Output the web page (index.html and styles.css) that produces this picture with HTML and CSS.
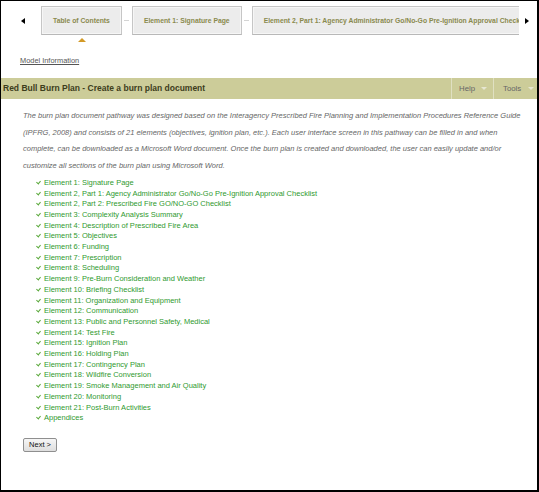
FILE: index.html
```html
<!DOCTYPE html>
<html>
<head>
<meta charset="utf-8">
<link rel="stylesheet" href="styles.css">
</head>
<body>
<div class="frame">
  <div class="steps">
    <span class="nav-arrow left"></span>
    <div class="tabs">
      <div class="tab">Table of Contents</div>
      <span class="link"></span>
      <div class="tab">Element 1: Signature Page</div>
      <span class="link"></span>
      <div class="tab">Element 2, Part 1: Agency Administrator Go/No-Go Pre-Ignition Approval Checklist</div>
    </div>
    <span class="nav-arrow right"></span>
  </div>
  <div class="pointer-row"><span class="pointer"></span></div>
  <div class="model"><a href="#">Model Information</a></div>
  <div class="bar">
    <div class="title">Red Bull Burn Plan - Create a burn plan document</div>
    <div class="menu">
      <div class="menu-item help">Help <span class="caret"></span></div>
      <div class="menu-item tools">Tools <span class="caret"></span></div>
    </div>
  </div>
  <div class="content">
    <p class="intro">The burn plan document pathway was designed based on the Interagency Prescribed Fire Planning and Implementation Procedures Reference Guide (IPFRG, 2008) and consists of 21 elements (objectives, ignition plan, etc.). Each user interface screen in this pathway can be filled in and when complete, can be downloaded as a Microsoft Word document. Once the burn plan is created and downloaded, the user can easily update and/or customize all sections of the burn plan using Microsoft Word.</p>
    <ul class="elements">
      <li>Element 1: Signature Page</li>
      <li>Element 2, Part 1: Agency Administrator Go/No-Go Pre-Ignition Approval Checklist</li>
      <li>Element 2, Part 2: Prescribed Fire GO/NO-GO Checklist</li>
      <li>Element 3: Complexity Analysis Summary</li>
      <li>Element 4: Description of Prescribed Fire Area</li>
      <li>Element 5: Objectives</li>
      <li>Element 6: Funding</li>
      <li>Element 7: Prescription</li>
      <li>Element 8: Scheduling</li>
      <li>Element 9: Pre-Burn Consideration and Weather</li>
      <li>Element 10: Briefing Checklist</li>
      <li>Element 11: Organization and Equipment</li>
      <li>Element 12: Communication</li>
      <li>Element 13: Public and Personnel Safety, Medical</li>
      <li>Element 14: Test Fire</li>
      <li>Element 15: Ignition Plan</li>
      <li>Element 16: Holding Plan</li>
      <li>Element 17: Contingency Plan</li>
      <li>Element 18: Wildfire Conversion</li>
      <li>Element 19: Smoke Management and Air Quality</li>
      <li>Element 20: Monitoring</li>
      <li>Element 21: Post-Burn Activities</li>
      <li>Appendices</li>
    </ul>
    <button class="next" type="button">Next &gt;</button>
  </div>
</div>
</body>
</html>
```

FILE: styles.css
```css
* { box-sizing: border-box; }
html, body { margin: 0; padding: 0; background: #fff; }
body { font-family: "Liberation Sans", Arial, sans-serif; }

.frame {
  width: 539px;
  height: 492px;
  border: 1px solid #000;
  border-right-width: 2px;
  border-bottom-width: 2px;
  overflow: hidden;
  background: #fff;
}

.steps {
  display: flex;
  align-items: center;
  margin-top: 5px;
  height: 29px;
}
.nav-arrow {
  width: 0;
  height: 0;
  border-top: 3px solid transparent;
  border-bottom: 3px solid transparent;
  flex: none;
}
.nav-arrow.left {
  border-right: 4px solid #000;
  margin-left: 20px;
  margin-right: 16px;
}
.nav-arrow.right {
  border-left: 4px solid #000;
  margin-left: 6px;
}
.tabs {
  display: flex;
  align-items: center;
  width: 478px;
  overflow: hidden;
  flex: none;
}
.tab {
  flex: none;
  height: 29px;
  line-height: 27px;
  padding: 0 11px;
  background: #ececec;
  border: 1px solid #c6c6c6;
  border-bottom-color: #b8b8b8;
  box-shadow: inset 0 0 0 1px #f6f6f6;
  color: #8a8a4e;
  font-weight: bold;
  font-size: 6.8px;
  white-space: nowrap;
}
.link {
  flex: none;
  width: 10px;
  display: flex;
  justify-content: center;
}
.link::before {
  content: "";
  width: 5px;
  height: 1px;
  background: #d4d4d4;
}

.pointer-row {
  height: 8px;
  padding-left: 77px;
  padding-top: 3px;
}
.pointer {
  display: block;
  width: 0;
  height: 0;
  border-left: 4px solid transparent;
  border-right: 4px solid transparent;
  border-bottom: 4px solid #d39a26;
}

.model {
  padding-left: 19px;
  margin-top: 13px;
  height: 22px;
  font-size: 7.4px;
}
.model a {
  color: #555;
  text-decoration: underline;
}

.bar {
  display: flex;
  align-items: stretch;
  height: 21px;
  background: #cccc99;
}
.title {
  flex: 1;
  padding-left: 2px;
  line-height: 21px;
  font-size: 8.5px;
  font-weight: bold;
  color: #3d3d1c;
}
.menu {
  display: flex;
}
.menu-item {
  display: flex;
  align-items: center;
  border-left: 1px solid #e0e0c2;
  font-size: 7.8px;
  color: #666;
}
.menu-item.help {
  width: 42px;
  padding-left: 7px;
  gap: 6px;
}
.menu-item.tools {
  width: 44px;
  padding-left: 9px;
  gap: 7px;
}
.caret {
  width: 0;
  height: 0;
  border-left: 3px solid transparent;
  border-right: 3px solid transparent;
  border-top: 3px solid #e6e6d2;
}

.content {
  padding-left: 22px;
  padding-right: 14px;
}
.intro {
  margin: 9px 0 0 0;
  font-size: 7.5px;
  line-height: 16.7px;
  font-style: italic;
  color: #666;
}
.elements {
  list-style: none;
  margin: 3px 0 0 0;
  padding: 0 0 0 14px;
  font-size: 7.5px;
  line-height: 10.7px;
  color: #2f9a2f;
}
.elements li {
  position: relative;
  padding-left: 7px;
}
.elements li::before {
  content: "";
  position: absolute;
  left: 0;
  top: 2px;
  width: 2px;
  height: 3px;
  border-right: 1px solid #5aa83a;
  border-bottom: 1px solid #5aa83a;
  transform: rotate(40deg);
}
.next {
  margin-top: 14px;
  width: 34px;
  height: 14px;
  padding: 0;
  font-family: "Liberation Sans", Arial, sans-serif;
  font-size: 7.5px;
  color: #111;
  background: linear-gradient(#f6f6f6, #dedede);
  border: 1px solid #8f8f8f;
  border-radius: 2px;
}
```
